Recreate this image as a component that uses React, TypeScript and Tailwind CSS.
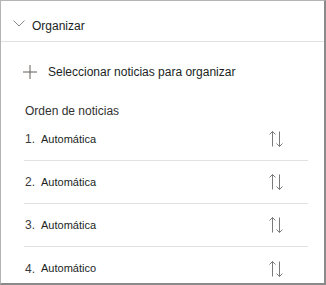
import React from 'react'

const items = ['Automática', 'Automática', 'Automática', 'Automático']

const SortIcon = () => (
    <svg width="16" height="18" viewBox="0 0 16 18" fill="none" stroke="#7a7a7a" strokeWidth="1">
        <path d="M4.5 1.5V16.5M1.5 4.5L4.5 1.5L7.5 4.5" />
        <path d="M11.5 1.5V16.5M8.5 13.5L11.5 16.5L14.5 13.5" />
    </svg>
)

const App = () => {
    return (
        <div className="w-[326px] h-[285px] bg-white overflow-hidden border-t border-l border-t-[#b4b4b4] border-l-[#b4b4b4] border-r-2 border-b-2 border-r-[#8a8a8a] border-b-[#8a8a8a] font-['Liberation_Sans',Arial,sans-serif] text-[#201f1e]">
            <div className="h-[41px] border-b border-[#e1e1e1] flex items-center pt-[10px]">
                <svg className="ml-[12px] -mt-[6px]" width="12" height="7" viewBox="0 0 12 7" fill="none" stroke="#8a8886" strokeWidth="1">
                    <path d="M0.5 0.5L6 6L11.5 0.5" />
                </svg>
                <span className="ml-[7px] text-[12px] leading-none">Organizar</span>
            </div>

            <div className="flex items-center h-[16px] mt-[22px] pl-[22px]">
                <svg width="14" height="14" viewBox="0 0 14 14" fill="none" stroke="#605e5c" strokeWidth="1">
                    <path d="M7 0V14M0 7H14" />
                </svg>
                <span className="ml-[11px] text-[12px] leading-none">Seleccionar noticias para organizar</span>
            </div>

            <div className="pl-[24px] mt-[25px] text-[12px] leading-none text-[#323130]">Orden de noticias</div>

            <div className="mt-[1px] ml-[23px] w-[284px]">
                {items.map((label, i) => (
                    <div key={i} className={`h-[43px] flex items-center ${i < items.length - 1 ? 'border-b border-[#e1e1e1]' : ''}`}>
                        <span className="ml-[1px] w-[16px] text-[12px] leading-none text-[#3b3a39]">{i + 1}.</span>
                        <span className="text-[11px] leading-none">{label}</span>
                        <div className="ml-auto mr-[24px] flex">
                            <SortIcon />
                        </div>
                    </div>
                ))}
            </div>
        </div>
    )
}

export default App
